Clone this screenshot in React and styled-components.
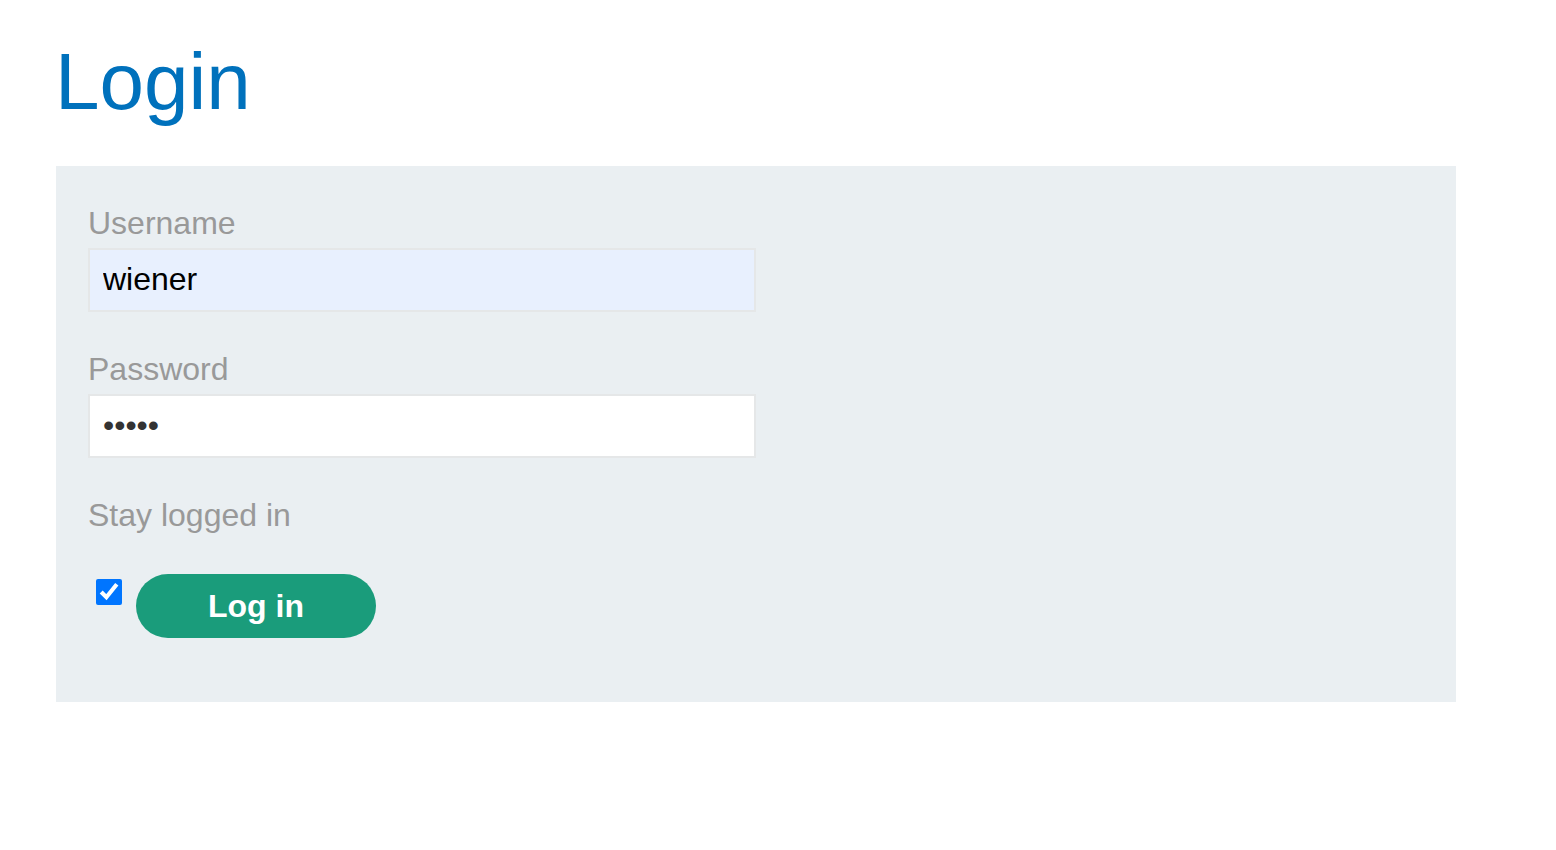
import React from "react";
import styled, { createGlobalStyle } from "styled-components";

const Global = createGlobalStyle`
  html, body { margin: 0; padding: 0; background: #ffffff; }
  body { font-family: "Liberation Sans", Arial, Helvetica, sans-serif; }
`;

const Page = styled.main`
  padding: 37px 100px 0 56px;
  display: flex;
  flex-direction: column;
  align-items: flex-start;
`;

const Title = styled.h1`
  margin: 0 0 40px -1px;
  font-size: 80px;
  line-height: 89px;
  font-weight: 400;
  color: #0071bc;
`;

const Panel = styled.section`
  width: 1400px;
  box-sizing: border-box;
  background: #eaeff2;
  padding: 40px 32px 64px 32px;
`;

const Form = styled.form`
  display: flex;
  flex-direction: column;
  align-items: flex-start;
`;

const Label = styled.label`
  display: block;
  font-size: 32px;
  line-height: 34px;
  color: #999999;
  margin: ${(p) => (p.$first ? "0" : "40px")} 0 8px 0;
`;

const Input = styled.input`
  box-sizing: border-box;
  width: 668px;
  height: 64px;
  border: 2px solid #e5e7e8;
  background: ${(p) => (p.$filled ? "#e8f0fe" : "#ffffff")};
  padding: 0 13px 2px 13px;
  font-family: "Liberation Sans", Arial, sans-serif;
  font-size: 32px;
  color: ${(p) => (p.type === "password" ? "#333333" : "#000000")};
  outline: none;
`;

const Row = styled.div`
  display: flex;
  align-items: flex-start;
  margin-top: 34px;
`;

const Check = styled.input`
  width: 26px;
  height: 26px;
  margin: 5px 14px 0 8px;
  accent-color: #0075ff;
`;

const Button = styled.button`
  width: 240px;
  height: 64px;
  border: none;
  border-radius: 32px;
  background: #1a9c7b;
  color: #ffffff;
  font-family: "Liberation Sans", Arial, sans-serif;
  font-weight: 700;
  font-size: 32px;
  cursor: pointer;
`;

export default function App() {
  return (
    <>
      <Global />
      <Page>
        <Title>Login</Title>
        <Panel>
          <Form onSubmit={(e) => e.preventDefault()}>
            <Label $first htmlFor="username">Username</Label>
            <Input id="username" $filled defaultValue="wiener" />
            <Label htmlFor="password">Password</Label>
            <Input id="password" type="password" defaultValue="peter" />
            <Label>Stay logged in</Label>
            <Row>
              <Check type="checkbox" defaultChecked />
              <Button type="submit">Log in</Button>
            </Row>
          </Form>
        </Panel>
      </Page>
    </>
  );
}
